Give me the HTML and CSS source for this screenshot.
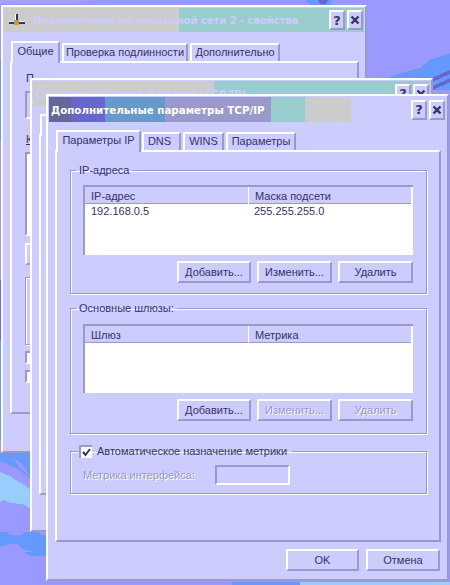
FILE: index.html
```html
<!DOCTYPE html>
<html lang="ru">
<head>
    <meta charset="UTF-8">
    <title>Дополнительные параметры TCP/IP</title>
    <link rel="stylesheet" href="styles.css">
</head>
<body>
    <!-- desktop wallpaper -->
    <svg class="wallpaper" width="450" height="585" viewBox="0 0 450 585" shape-rendering="crispEdges">
        <rect width="450" height="585" fill="#9999ff"/>
        <path d="M305 0H332L330 5H310Z" fill="#6699ff"/>
        <path d="M318 0H328L326 4H320Z" fill="#6666cc"/>
        <path d="M0 0H90L75 3H0Z" fill="#a3a3ff"/>
        <path d="M0 60H2V140H0Z" fill="#6699ff"/>
        <path d="M0 280H2V340H0Z" fill="#6666ff"/>
        <path d="M0 340H2V440H0Z" fill="#6699ff"/>
        <path d="M380 80L398 74L420 68L430 60L450 53V90H380Z" fill="#6699ff"/>
        <path d="M432 78L450 70V74L432 82Z" fill="#6666cc"/>
        <path d="M433 86L450 78V82L433 90Z" fill="#6666cc"/>
        <path d="M0 453H30V480H0Z" fill="#6699ff"/>
        <path d="M0 461L16 468L30 478V492L0 476Z" fill="#9999ff"/>
        <path d="M14 458L22 464L30 476L20 469Z" fill="#9999ff"/>
        <path d="M0 472L10 476L30 489V508L22 504L10 503L4 500L0 502Z" fill="#99ccff"/>
        <path d="M0 532H8L10 535H22L24 532H36L46 536V552H34L22 549L18 544H8L0 547Z" fill="#6699ff"/>
        <path d="M24 552H46V556H30Z" fill="#6699ff"/>
        <path d="M232 582H300V585H232Z" fill="#6699ff"/>
        <path d="M300 582H450V585H300Z" fill="#99ccff"/>
    </svg>

    <!-- back window -->
    <div class="window win-lan">
        <div class="titlebar title-lan">
            <svg class="lan-icon" width="16" height="14" viewBox="0 0 16 14" shape-rendering="crispEdges">
                <rect x="6" y="1" width="3" height="8" fill="#333366"/>
                <rect x="6" y="1" width="1" height="8" fill="#ffffff"/>
                <rect x="0" y="8" width="16" height="3" fill="#333366"/>
                <rect x="0" y="8" width="16" height="1" fill="#ccffff"/>
                <rect x="5" y="7" width="5" height="5" fill="#cc9933"/>
            </svg>
            <span class="title-text faint">Подключение по локальной сети 2 - свойства</span>
            <div class="title-btn">?</div>
            <div class="title-btn">
                <svg width="10" height="10" viewBox="0 0 10 10"><path d="M1.500 1.500L8.500 8.500M8.500 1.500L1.500 8.500" stroke="#333366" stroke-width="2.400" fill="none"/></svg>
            </div>
        </div>
        <div class="tabs lan-tabs">
            <div class="tab active t-general">Общие</div>
            <div class="tab t-auth">Проверка подлинности</div>
            <div class="tab t-more">Дополнительно</div>
        </div>
        <div class="page lan-page">
            <div class="lan-label">П</div>
            <div class="lan-box"></div>
            <div class="lan-label second"><u>К</u></div>
            <div class="lan-list"></div>
            <div class="lan-btn"></div>
            <div class="lan-group"></div>
            <div class="lan-check"></div>
            <div class="lan-check"></div>
        </div>
    </div>

    <!-- middle window -->
    <div class="window win-inet">
        <div class="titlebar title-inet">
            <span class="title-text faint">Свойства: Internet Protocol (TCP/IP)</span>
            <div class="title-btn">?</div>
            <div class="title-btn">
                <svg width="10" height="10" viewBox="0 0 10 10"><path d="M1.500 1.500L8.500 8.500M8.500 1.500L1.500 8.500" stroke="#333366" stroke-width="2.400" fill="none"/></svg>
            </div>
        </div>
        <div class="tabs inet-tabs">
            <div class="tab active t-general"></div>
        </div>
        <div class="page inet-page"></div>
    </div>

    <!-- front window -->
    <div class="window win-tcp">
        <div class="titlebar title-tcp">
            <span class="title-text">Дополнительные параметры TCP/IP</span>
            <div class="title-btn">?</div>
            <div class="title-btn">
                <svg width="10" height="10" viewBox="0 0 10 10"><path d="M1.500 1.500L8.500 8.500M8.500 1.500L1.500 8.500" stroke="#333366" stroke-width="2.400" fill="none"/></svg>
            </div>
        </div>

        <div class="tabs tcp-tabs">
            <div class="tab active t-ip">Параметры IP</div>
            <div class="tab t-dns">DNS</div>
            <div class="tab t-wins">WINS</div>
            <div class="tab t-opts">Параметры</div>
        </div>

        <div class="page tcp-page">
            <fieldset class="group">
                <legend>IP-адреса</legend>
                <div class="list">
                    <div class="list-row list-head">
                        <div>IP-адрес</div>
                        <div>Маска подсети</div>
                    </div>
                    <div class="list-row">
                        <div>192.168.0.5</div>
                        <div>255.255.255.0</div>
                    </div>
                </div>
                <div class="btn-row">
                    <button class="btn add">Добавить...</button>
                    <button class="btn">Изменить...</button>
                    <button class="btn">Удалить</button>
                </div>
            </fieldset>

            <fieldset class="group gateways">
                <legend>Основные шлюзы:</legend>
                <div class="list">
                    <div class="list-row list-head">
                        <div>Шлюз</div>
                        <div>Метрика</div>
                    </div>
                </div>
                <div class="btn-row">
                    <button class="btn add">Добавить...</button>
                    <button class="btn" disabled>Изменить...</button>
                    <button class="btn" disabled>Удалить</button>
                </div>
            </fieldset>

            <fieldset class="group metric">
                <legend>
                    <span class="check">
                        <svg width="11" height="11" viewBox="0 0 11 11"><path d="M2 5L4.500 8L9 2" stroke="#333366" stroke-width="2" fill="none"/></svg>
                    </span>
                    Автоматическое назначение метрики
                </legend>
                <div class="metric-row">
                    <span class="disabled-text">Метрика интерфейса:</span>
                    <div class="field"></div>
                </div>
            </fieldset>
        </div>

        <div class="footer">
            <button class="btn ok">OK</button>
            <button class="btn cancel">Отмена</button>
        </div>
    </div>
</body>
</html>
```

FILE: styles.css
```css
body{
    margin: 0;
    width: 450px;
    height: 585px;
    overflow: hidden;
    position: relative;
    background-color: #9999ff;
    font-family: "Liberation Sans", Arial, sans-serif;
    font-size: 11px;
    color: #333366;
}

.wallpaper{
    position: absolute;
    left: 0;
    top: 0;
}

/* windows sit on the desktop, so these are placed by hand */
.window{
    position: absolute;
    box-sizing: border-box;
    background-color: #ccccff;
    border: 2px solid;
    border-color: #ffffff #9999cc #9999cc #ffffff;
    padding: 1px;
}

.win-lan{
    z-index: 1;
    left: 1px;
    top: 5px;
    width: 366px;
    height: 448px;
    padding-left: 0;
}

.win-inet{
    z-index: 2;
    left: 30px;
    top: 78px;
    width: 403px;
    height: 454px;
}

.win-tcp{
    z-index: 3;
    left: 46px;
    top: 94px;
    width: 403px;
    height: 487px;
}

/* title bars */
.titlebar{
    display: flex;
    align-items: center;
    height: 25px;
    padding-right: 1px;
    gap: 2px;
}

.title-lan{
    height: 24px;
    background: linear-gradient(to right, #cccccc 176px, #99cccc 176px);
}

.title-inet{
    background: linear-gradient(to right, #cccccc 181px, #99cccc 181px);
}

.title-tcp{
    background: linear-gradient(to right,
        #666699 22px, #6666cc 22px, #6666cc 56px,
        #6699cc 56px, #6699cc 116px,
        #9999cc 116px, #9999cc 222px,
        #99cccc 222px, #99cccc 256px,
        #cccccc 256px, #cccccc 302px,
        #ccccff 302px);
}

.lan-icon{
    margin-left: 6px;
    margin-right: 6px;
    flex: none;
}

.title-text{
    flex: 1;
    font-family: "DejaVu Sans", sans-serif;
    font-size: 10.3px;
    font-weight: bold;
    color: #ffffff;
    padding-left: 2px;
    white-space: nowrap;
}

.title-lan .title-text{
    padding-left: 0;
    letter-spacing: -0.2px;
}

.title-text.faint{
    color: #ccccff;
}

.title-btn{
    box-sizing: border-box;
    width: 16px;
    height: 20px;
    flex: none;
    display: flex;
    align-items: center;
    justify-content: center;
    background-color: #ccccff;
    border: 2px solid;
    border-color: #ffffff #9999cc #9999cc #ffffff;
    font-family: "DejaVu Sans", sans-serif;
    font-size: 13px;
    font-weight: bold;
}

/* tabs */
.tabs{
    position: relative;
    display: flex;
    align-items: flex-end;
    height: 20px;
    margin-top: 8px;
    margin-left: 7px;
}

.tab{
    box-sizing: border-box;
    height: 18px;
    padding-top: 1px;
    margin-left: 2px;
    text-align: center;
    background-color: #ccccff;
    border: 2px solid;
    border-color: #ffffff #9999cc transparent #ffffff;
    border-bottom: none;
    white-space: nowrap;
}

.tab.active{
    position: relative;
    z-index: 1;
    height: 22px;
    margin-left: 0;
    margin-bottom: -2px;
    padding-top: 2px;
}

.t-general{ width: 49px; }
.t-auth{ width: 126px; }
.t-more{ width: 90px; }
.t-ip{ width: 85px; }
.t-dns{ width: 39px; margin-left: 1px; padding-right: 4px; }
.t-wins{ width: 41px; }
.t-opts{ width: 70px; }

.page{
    box-sizing: border-box;
    background-color: #ccccff;
    border: 2px solid;
    border-color: #ffffff #9999cc #9999cc #ffffff;
}

.tcp-page{
    width: 386px;
    height: 392px;
    margin-left: 6px;
    padding: 12px 12px 0 13px;
}

.inet-page{
    width: 386px;
    height: 361px;
    margin-left: 6px;
}

.lan-tabs{
    margin-left: 8px;
    height: 21px;
}

.lan-page{
    width: 349px;
    height: 353px;
    margin-left: 7px;
    padding: 9px 13px 0 13px;
}

/* back window contents, mostly covered */
.lan-label{
    height: 13px;
    padding-left: 1px;
    white-space: nowrap;
}

.lan-label.second{
    margin-top: 14px;
}

.lan-box{
    box-sizing: border-box;
    height: 28px;
    margin-top: 6px;
    border: 2px solid;
    border-color: #9999cc #ffffff #ffffff #9999cc;
}

.lan-list{
    box-sizing: border-box;
    height: 84px;
    margin-top: 6px;
    background-color: #ffffff;
    border: 2px solid;
    border-color: #9999cc #ffffff #ffffff #9999cc;
}

.lan-btn{
    box-sizing: border-box;
    height: 22px;
    margin-top: 7px;
    border: 2px solid;
    border-color: #ffffff #9999cc #9999cc #ffffff;
}

.lan-group{
    box-sizing: border-box;
    height: 68px;
    margin-top: 12px;
    border: 1px solid #9999cc;
    box-shadow: inset 1px 1px 0 #ffffff, 1px 1px 0 #ffffff;
}

.lan-check{
    box-sizing: border-box;
    width: 13px;
    height: 13px;
    margin-top: 6px;
    background-color: #ffffff;
    border: 2px solid;
    border-color: #9999cc #ffffff #ffffff #9999cc;
}

/* group boxes */
.group{
    box-sizing: border-box;
    margin: 0 0 8px 0;
    padding: 8px 13px 10px 12px;
    min-width: 0;
    border: 1px solid #9999cc;
    box-shadow: inset 1px 1px 0 #ffffff, 1px 1px 0 #ffffff;
}

.group legend{
    margin-left: -7px;
    padding: 0 3px;
    height: 13px;
    line-height: 13px;
}

.gateways{
    padding-top: 9px;
    padding-bottom: 12px;
    margin-bottom: 11px;
}

.gateways .list{
    height: 69px;
}

.metric{
    padding: 6px 13px 8px 12px;
}

.metric legend{
    display: flex;
    align-items: center;
    gap: 5px;
    margin-left: -4px;
    padding-left: 0;
    padding-right: 5px;
}

.check{
    box-sizing: border-box;
    width: 13px;
    height: 13px;
    display: flex;
    align-items: center;
    justify-content: center;
    background-color: #ffffff;
    border-top: 2px solid #9999cc;
    border-left: 2px solid #9999cc;
}

.metric-row{
    display: flex;
    align-items: center;
    padding-top: 1px;
}

.disabled-text{
    width: 132px;
    color: #9999cc;
    text-shadow: 1px 1px 0 #ffffff;
}

.field{
    box-sizing: border-box;
    width: 75px;
    height: 20px;
    border: 2px solid;
    border-color: #9999cc #ffffff #ffffff #9999cc;
}

/* list views */
.list{
    box-sizing: border-box;
    height: 70px;
    background-color: #ffffff;
    border-top: 2px solid #9999cc;
    border-left: 2px solid #9999cc;
}

.list-row{
    display: grid;
    grid-template-columns: 163px 162px;
    height: 14px;
    line-height: 14px;
}

.list-row div{
    padding-left: 6px;
}

.list-head{
    height: 16px;
    line-height: 18px;
    margin-right: 2px;
    background-color: #ccccff;
    border-bottom: 1px solid #9999cc;
}

.list-head div + div{
    border-left: 1px solid #ffffff;
    padding-left: 6px;
}

/* push buttons */
.btn-row{
    display: flex;
    justify-content: flex-end;
    gap: 6px;
    margin-top: 6px;
}

.btn{
    box-sizing: border-box;
    width: 75px;
    height: 22px;
    padding: 0;
    background-color: #ccccff;
    border: 2px solid;
    border-color: #ffffff #9999cc #9999cc #ffffff;
    border-radius: 0;
    font-family: inherit;
    font-size: inherit;
    color: #333366;
}

.btn.add{
    width: 74px;
}

.btn.ok{
    width: 73px;
}

.btn.cancel{
    width: 74px;
}

.btn:disabled{
    color: #9999cc;
    text-shadow: 1px 1px 0 #ffffff;
}

.footer{
    display: flex;
    justify-content: flex-end;
    gap: 7px;
    margin-top: 7px;
    margin-right: 6px;
}
```
